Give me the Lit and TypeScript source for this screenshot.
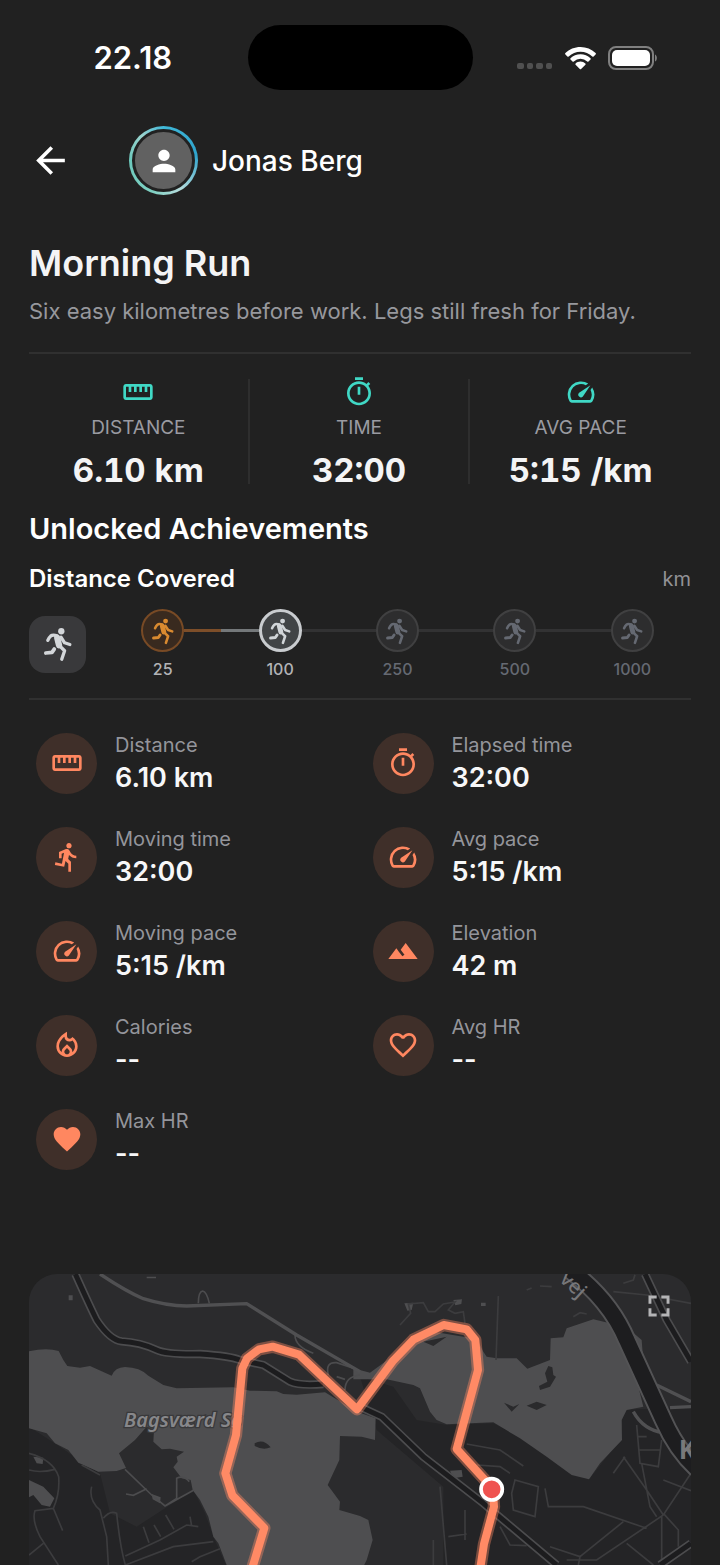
import { LitElement, html, svg, css, TemplateResult } from "lit";
import { customElement, property } from "lit/decorators.js";
import { classMap } from "lit/directives/class-map.js";

const ICONS: Record<string, TemplateResult> = {
  back: svg`<path d="M20 11H7.83l5.59-5.59L12 4l-8 8 8 8 1.41-1.41L7.83 13H20v-2z"/>`,
  person: svg`<path d="M12 12c2.21 0 4-1.79 4-4s-1.79-4-4-4-4 1.79-4 4 1.79 4 4 4zm0 2c-2.67 0-8 1.34-8 4v2h16v-2c0-2.66-5.33-4-8-4z"/>`,
  ruler: svg`<path d="M21 6H3c-1.1 0-2 .9-2 2v8c0 1.1.9 2 2 2h18c1.1 0 2-.9 2-2V8c0-1.1-.9-2-2-2zm0 10H3V8h2v4h2V8h2v4h2V8h2v4h2V8h2v4h2V8h2v8z"/>`,
  timer: svg`<path d="M15 1H9v2h6V1zm-4 13h2V8h-2v6zm8.03-6.61l1.42-1.42c-.43-.51-.9-.99-1.41-1.41l-1.42 1.42C16.07 4.74 14.12 4 12 4c-4.97 0-9 4.03-9 9s4.02 9 9 9 9-4.03 9-9c0-2.12-.74-4.07-1.97-5.61zM12 20c-3.87 0-7-3.13-7-7s3.13-7 7-7 7 3.13 7 7-3.13 7-7 7z"/>`,
  speed: svg`<path d="M20.38 8.57l-1.23 1.85a8 8 0 0 1-.22 7.58H5.07A8 8 0 0 1 15.58 6.85l1.85-1.23A10 10 0 0 0 3.35 19a2 2 0 0 0 1.72 1h13.85a2 2 0 0 0 1.74-1 10 10 0 0 0-.27-10.44zm-9.79 6.84a2 2 0 0 0 2.83 0l5.66-8.49-8.49 5.66a2 2 0 0 0 0 2.83z"/>`,
  run: svg`<path d="M13.49 5.48c1.1 0 2-.9 2-2s-.9-2-2-2-2 .9-2 2 .9 2 2 2zm-3.6 13.9l1-4.4 2.1 2v6h2v-7.5l-2.1-2 .6-3c1.3 1.5 3.3 2.5 5.5 2.5v-2c-1.9 0-3.5-1-4.3-2.4l-1-1.6c-.4-.6-1-1-1.7-1-.3 0-.5.1-.8.1l-5.2 2.2v4.7h2v-3.4l1.8-.7-1.6 8.1-4.900-1-.4 2 7 1.400z"/>`,
  terrain: svg`<path d="M14 6l-3.75 5 2.85 3.8-1.6 1.2C9.81 13.75 7 10 7 10l-6 8h22L14 6z"/>`,
  fire: svg`<path d="M16 6l-.44.55c-.42.52-.98.75-1.54.75C13 7.3 12 6.52 12 5.3V2S4 6 4 13c0 4.42 3.58 8 8 8s8-3.58 8-8c0-2.96-1.61-5.62-4-7zm-4 13c-1.1 0-2-.87-2-1.94 0-.51.2-.99.58-1.36L12 14.3l1.43 1.4c.37.37.57.85.57 1.36C14 18.13 13.1 19 12 19zm3.96-1.5c.04-.36.22-1.89-1.13-3.22L12 11.5l-2.83 2.78C7.81 15.62 8 17.16 8.04 17.5A5.97 5.97 0 0 1 6 13c0-3.16 2.13-5.65 4.03-7.25a3.98 3.98 0 0 0 3.99 3.55c.78 0 1.54-.23 2.18-.66A6.2 6.2 0 0 1 18 13c0 1.79-.79 3.4-2.04 4.5z"/>`,
  heartLine: svg`<path d="M16.5 3c-1.74 0-3.41.81-4.5 2.09C10.91 3.81 9.24 3 7.5 3 4.42 3 2 5.42 2 8.5c0 3.78 3.4 6.86 8.55 11.54L12 21.35l1.45-1.32C18.6 15.36 22 12.28 22 8.5 22 5.42 19.58 3 16.5 3zm-4.4 15.55l-.1.1-.1-.1C7.14 14.24 4 11.39 4 8.5 4 6.5 5.5 5 7.5 5c1.54 0 3.04.99 3.57 2.36h1.87C13.46 5.99 14.96 5 16.5 5c2 0 3.5 1.5 3.5 3.5 0 2.89-3.14 5.74-7.9 10.05z"/>`,
  heart: svg`<path d="M12 21.35l-1.45-1.32C5.4 15.36 2 12.28 2 8.5 2 5.42 4.42 3 7.5 3c1.74 0 3.41.81 4.5 2.09C13.09 3.81 14.76 3 16.5 3 19.58 3 22 5.42 22 8.5c0 3.78-3.4 6.86-8.55 11.54L12 21.35z"/>`,
  expand: svg`<path d="M3 3h7v2.5H5.500V10H3zM14 3h7v7h-2.500V5.500H14zM3 14h2.500v4.500H10V21H3zM18.500 14H21v7h-7v-2.500h4.500z"/>`,
  sprint: svg`<circle cx="14.2" cy="3.500" r="2.100"/><g fill="none" stroke="currentColor" stroke-linecap="round" stroke-linejoin="round"><path d="M11.500 8 12.700 12.800" stroke-width="4.200"/><path d="M11.500 6.500Q8.500 5.600 7.200 6.600 6 7.600 5.200 9.600M14 7.500l2.400 3.700 3.500 1.100M13 13.200l3.400 3.300-1.900 5.700" stroke-width="2.200"/><path d="M9.500 15.400 8 17.600 3.900 18" stroke-width="2.500"/></g>`,
};

@customElement("ui-icon")
class UiIcon extends LitElement {
  @property() name = "back";
  static styles = css`
    :host { display: inline-flex; width: 32px; height: 32px; }
    svg { width: 100%; height: 100%; fill: currentColor; }
  `;
  render() {
    return html`<svg viewBox="0 0 24 24" aria-hidden="true">${ICONS[this.name]}</svg>`;
  }
}

@customElement("status-bar")
class StatusBar extends LitElement {
  static styles = css`
    :host { display: grid; grid-template-columns: 1fr auto 1fr; align-items: center; padding-top: 25px; }
    .time { text-align: center; font-size: 31px; line-height: 36px; font-weight: 600; padding-left: 18px; }
    .island { width: 225px; height: 65px; border-radius: 33px; background: #000; }
    .signals { display: flex; align-items: center; justify-content: flex-end; gap: 12px; padding-right: 62px; }
    .cell { width: 36px; height: 30px; fill: #505050; }
    .wifi { width: 31px; height: 24px; fill: #fff; }
    .battery { width: 50px; height: 24px; }
  `;
  render() {
    return html`
      <div class="time">22.18</div>
      <div class="island"></div>
      <div class="signals">
        <svg class="cell" viewBox="0 0 36 30"><rect x="0" y="20" width="7" height="6" rx="2"/><rect x="10" y="20" width="6" height="6" rx="2"/><rect x="19" y="20" width="7" height="6" rx="2"/><rect x="29" y="20" width="6" height="6" rx="2"/></svg>
        <svg class="wifi" viewBox="0 0 31 24"><path d="M15.5 1C9.6 1 4.3 3.3.4 7.1c-.4.4-.4.9 0 1.3l2 2c.4.4.9.4 1.3 0a17 17 0 0 1 23.6 0c.4.4.9.4 1.3 0l2-2c.4-.4.4-.9 0-1.3A21.7 21.7 0 0 0 15.5 1z"/><path d="M15.5 8.3c-3.9 0-7.4 1.5-10 3.9-.4.4-.4.9 0 1.3l2 2c.4.4.9.4 1.3 0a9.7 9.7 0 0 1 13.4 0c.4.4.9.4 1.3 0l2-2c.4-.4.4-.9 0-1.3a14.7 14.7 0 0 0-10-3.900z"/><path d="M15.5 15.5c-1.9 0-3.6.7-4.9 1.9-.4.4-.4.9 0 1.3l4.200 4.300c.4.4.9.4 1.300 0l4.300-4.300c.4-.4.4-.9 0-1.300a7.200 7.200 0 0 0-4.900-1.900z"/></svg>
        <svg class="battery" viewBox="0 0 50 24"><rect x="1" y="1" width="44" height="22" rx="7" fill="none" stroke="#808080" stroke-width="2"/><rect x="4" y="4" width="38" height="16" rx="5" fill="#fff"/><path d="M47 8.500c2.500 1 2.500 6 0 7z" fill="#808080"/></svg>
      </div>`;
  }
}

@customElement("summary-stats")
class SummaryStats extends LitElement {
  static styles = css`
    :host { display: grid; grid-template-columns: repeat(3, 1fr); }
    .stat { display: flex; flex-direction: column; align-items: center; height: 105px; }
    .stat:not(:last-child) { border-right: 2px solid #2e2e2e; }
    ui-icon { color: #40d8c5; margin-top: -3px; }
    .label { font-size: 19px; line-height: 24px; color: #9a9ba1; margin-top: 8px; }
    .value { font-size: 33px; line-height: 44px; font-weight: 700; font-variant-numeric: tabular-nums; color: #f4f4f5; margin-top: 8px; white-space: nowrap; }
  `;
  render() {
    const stats = [["ruler", "DISTANCE", "6.10 km"], ["timer", "TIME", "32:00"], ["speed", "AVG PACE", "5:15 /km"]];
    return stats.map(([icon, label, value]) => html`
      <div class="stat"><ui-icon name=${icon}></ui-icon><div class="label">${label}</div><div class="value">${value}</div></div>`);
  }
}

@customElement("achievement-track")
class AchievementTrack extends LitElement {
  static styles = css`
    :host { display: flex; align-items: center; gap: 18px; }
    .badge { display: grid; place-items: center; flex: none; width: 57px; height: 57px; border-radius: 16px; background: #39393b; color: #d3d6d9; }
    .badge ui-icon { width: 36px; height: 36px; }
    .track { flex: 1; display: grid; grid-template-columns: repeat(5, 1fr); margin: 0; padding: 0; list-style: none; }
    .step { display: grid; grid-template-columns: 1fr 43px 1fr; align-items: center; row-gap: 7px; color: #656972; }
    .node { box-sizing: border-box; display: grid; place-items: center; width: 43px; height: 43px; border-radius: 50%; border: 2px solid #404041; background: #2d2d2e; }
    .node ui-icon { width: 28px; height: 28px; }
    .line { height: 3px; background: #323233; }
    .step:first-child .before, .step:last-child .after { visibility: hidden; }
    .label { grid-column: 1 / -1; text-align: center; font-size: 16px; line-height: 20px; font-weight: 500; }
    .bronze .label, .silver .label { color: #b2b3b6; }
    .bronze .node { color: #d98a30; border-color: #784a25; background: #392a1f; }
    .bronze .line { background: #7d4e29; }
    .silver .node { color: #d1d5d8; border: 3px solid #c9cccf; background: #414446; }
    .silver .before { background: #74787a; }
  `;
  render() {
    const steps: [string, string][] = [["25", "bronze"], ["100", "silver"], ["250", ""], ["500", ""], ["1000", ""]];
    return html`
      <div class="badge"><ui-icon name="sprint"></ui-icon></div>
      <ol class="track">
        ${steps.map(([km, tier]) => html`
          <li class=${classMap({ step: true, bronze: tier === "bronze", silver: tier === "silver" })}>
            <span class="line before"></span><span class="node"><ui-icon name="sprint"></ui-icon></span><span class="line after"></span>
            <span class="label">${km}</span>
          </li>`)}
      </ol>`;
  }
}

@customElement("metric-grid")
class MetricGrid extends LitElement {
  static styles = css`
    :host { display: grid; grid-template-columns: repeat(2, 1fr); column-gap: 18px; row-gap: 30px; padding-left: 7px; }
    .metric { display: flex; gap: 18px; height: 64px; align-items: center; }
    .disc { display: grid; place-items: center; flex: none; width: 61px; height: 61px; border-radius: 50%; background: #3f2f29; color: #ff8760; }
    .label { font-size: 20px; line-height: 30px; color: #94959b; }
    .value { font-size: 27px; line-height: 36px; font-weight: 600; color: #f7f7f8; }
  `;
  render() {
    const metrics = [
      ["ruler", "Distance", "6.10 km"], ["timer", "Elapsed time", "32:00"],
      ["run", "Moving time", "32:00"], ["speed", "Avg pace", "5:15 /km"],
      ["speed", "Moving pace", "5:15 /km"], ["terrain", "Elevation", "42 m"],
      ["fire", "Calories", "--"], ["heartLine", "Avg HR", "--"],
      ["heart", "Max HR", "--"],
    ];
    return metrics.map(([icon, label, value]) => html`
      <div class="metric">
        <div class="disc"><ui-icon name=${icon}></ui-icon></div>
        <div><div class="label">${label}</div><div class="value">${value}</div></div>
      </div>`);
  }
}

const ROUTE = "M755 930 793 804 697 706 676 640 708 525 727 325 741 295 777 268 818 260 897 284 1071 448 1178 304 1240 239 1331 195 1400 208 1426 240 1434 330 1370 567 1478 685 1482 740 1452 852 1440 930";

@customElement("route-map")
class RouteMap extends LitElement {
  static styles = css`
    :host { display: block; position: relative; overflow: hidden; border-radius: 28px 28px 0 0; background: #2b2b2d; min-height: 291px; }
    .map { position: absolute; inset: 0; width: 100%; height: 100%; }
    .water { fill: #4e4e50; }
    .land { fill: #2a2a2c; }
    .urban { fill: #242426; }
    .streets { fill: none; stroke: #3c3c3e; stroke-width: 5; }
    .road { fill: none; stroke: #505052; stroke-width: 10; stroke-linejoin: round; }
    .casing { fill: none; stroke: #4c4c4e; stroke-width: 25; stroke-linejoin: round; }
    .core { fill: none; stroke: #1c1c1e; stroke-width: 15; stroke-linejoin: round; }
    .motor-casing { fill: none; stroke: #535355; stroke-width: 58; }
    .motor { fill: none; stroke: #1d1d1f; stroke-width: 46; }
    .glow { fill: none; stroke: #ff8a65; stroke-opacity: 0.4; stroke-width: 37; stroke-linejoin: round; }
    .route { fill: none; stroke: #ff8a65; stroke-width: 24; stroke-linejoin: round; }
    .name { font: italic 600 60px "Noto Sans", "Open Sans", sans-serif; fill: #87878a; stroke: #39393b; stroke-width: 8; paint-order: stroke; }
    .street-name { font: 500 60px "Noto Sans", "Open Sans", sans-serif; fill: #77777a; }
    .town { font: 700 78px "Noto Sans", "Open Sans", sans-serif; fill: #79797b; }
    .expand { position: absolute; top: 16px; right: 16px; display: grid; place-items: center; padding: 2px; border: 0; background: none; color: #b4b4b6; }
    .expand ui-icon { width: 28px; height: 28px; }
  `;
  render() {
    return html`
      <svg class="map" viewBox="87 42 1986 873" preserveAspectRatio="xMidYMin slice" role="img" aria-label="Route map">
        <path class="urban" d="M87 500 180 560 250 610 300 640 330 760 410 800 580 690 615 760 640 830 680 920H87zM1080 350 1180 380 1250 480 1340 495 1480 490 1620 560 1700 630 1770 655 1860 540 1870 450 2073 440V920H1330V680L1130 510z"/>
        <path class="water" d="M87 274Q140 262 176 273L190 300 202 318 240 323 270 318 335 347Q345 322 375 321 420 322 445 347L490 375 530 385 700 382 750 392 830 394 850 402 890 404 975 397 1071 455 1127 475 1125 540 1085 530 1020 528 1018 600 983 675 1020 725 1018 750 1080 768 1105 780 1118 840 1100 900 1090 920H682L655 850 640 830 625 770 600 720 578 690 572 660 545 655 520 622 533 605 530 590 552 575 510 566 485 568 460 545 462 510 440 500 405 540 357 580 378 624 350 633 295 635 235 608 205 570 165 550 140 520 87 505z"/>
        <path class="water" d="M1060 325 1110 338 1190 280 1300 215 1390 230 1430 235 1450 275 1460 290 1490 295 1550 295 1582 326 1650 300 1652 235 1690 232 1700 205 1780 178 1830 190 1890 210 1925 240 1928 280 1900 320 1930 440 1880 450 1865 480 1866 540 1800 610 1767 658 1715 645 1640 590 1560 535 1480 487 1340 493 1310 480 1290 455 1260 385 1240 375 1160 358 1060 358z"/>
        <path class="land" d="M764 550Q790 535 812 562 790 572 764 558zM1635 340 1645 318 1657 322 1660 345 1668 350 1650 380 1620 390 1617 378 1642 365zM1512 428 1540 440 1558 432 1535 455zM1580 437 1610 425 1640 435 1610 450zM1270 245 1340 230 1300 258z"/>
        <path class="water" d="M100 590 130 593 128 612 110 610zM87 660 130 680 163 715 150 740 125 735 100 705 87 712zM455 702 482 712 480 730 458 718zM1350 632 1385 630 1388 650 1360 655zM206 106h12v15h-12zM440 50h28v5h-28zM1213 130 1240 128 1235 150 1222 152zM1360 120 1386 118 1384 132 1366 136zM1443 128h14v10h-14z"/>
        <g class="streets">
          <path d="M87 580Q160 600 176 650 180 700 160 745L188 812M87 630Q120 640 165 628M160 745 105 752Q95 780 120 830L175 915M87 885 130 850M245 615 300 645M275 680Q265 720 300 750L320 830 325 915M310 775Q330 750 350 760 360 860 376 915M376 888 480 840 560 795 595 800M430 800 447 848M462 795 482 830M497 765 522 808M570 770 575 798M376 915 390 910 520 860 640 845M575 905 600 890 660 866"/>
          <path d="M1400 552 1500 570 1570 618M1430 615 1500 620 1530 640M1545 660 1615 680 1605 770 1540 750 1535 700zM1635 685 1645 740 1750 740 1940 805M1320 680 1340 915M1395 750V840M1345 830 1400 822M1300 840V915M1500 800 1530 855 1580 857M1650 860 1740 890 1735 915M1740 890 1870 785M1700 900 1790 900 1990 765 2073 640M1990 765 1940 690 1870 590M1910 495 1920 610 1975 620 1985 540M1915 530H1940M1915 570H1980M1840 640 1875 590M1925 610 1950 740 1970 770M1880 850 1960 915M1985 770V915M1990 760 2035 810V860M1990 660 2073 692M1840 95 1940 105 2073 130M1870 70 1900 60 1905 44"/>
        </g>
        <g class="streets" stroke="#4c4c4e">
          <path stroke="#4c4c4e" d="M375 628 455 705 495 738 530 715V655Q550 645 568 665M495 738 582 690M378 702 400 706 440 686M595 130Q595 95 608 93 620 95 628 130M885 225Q885 260 940 280M985 345Q975 305 1010 308L1060 325M1010 350 1035 358M1035 390Q1035 350 1080 345"/>
          <path d="M1200 195 1232 160 1225 132 1270 128 1285 155 1305 155 1330 132 1365 126 1345 150 1365 160 1390 155 1395 190M1580 90 1595 84M1620 78 1655 80M1720 170 1740 158 1760 162M1495 108 1488 300"/>
        </g>
        <path class="road" d="M300 42Q380 95 430 116 500 138 560 138L740 131 890 225 1080 335"/>
        <path class="casing" d="M226 42Q270 140 290 180 330 240 365 244 420 247 470 270 500 284 600 282 690 288 720 300L790 315 870 365Q900 378 970 372"/>
        <path class="core" d="M226 42Q270 140 290 180 330 240 365 244 420 247 470 270 500 284 600 282 690 288 720 300L790 315 870 365Q900 378 970 372"/>
        <path class="casing" d="M1080 440 1145 470 1270 590 1450 730 1670 915M1935 42 2000 180 2073 305M1980 915 2073 850"/>
        <path class="core" d="M1080 440 1145 470 1270 590 1450 730 1670 915M1935 42 2000 180 2073 305M1980 915 2073 850"/>
        <path class="road" d="M1900 455Q1930 510 1990 518M1970 375 2073 425M2010 443 2073 440"/>
        <path class="motor-casing" d="M1710 30Q1830 120 1880 240L1990 480Q2030 570 2090 625"/>
        <path class="motor" d="M1710 30Q1830 120 1880 240L1990 480Q2030 570 2090 625"/>
        <text class="name" x="372" y="500">Bagsværd Sø</text>
        <text class="street-name" transform="translate(1676 62) rotate(42)">vej</text>
        <text class="town" x="2036" y="597">K</text>
        <path class="glow" d=${ROUTE}/>
        <path class="route" d=${ROUTE}/>
        <circle cx="1475" cy="688" r="32" fill="#ef5350" stroke="#fff" stroke-width="11"/>
      </svg>
      <button class="expand" type="button" aria-label="Expand map"><ui-icon name="expand"></ui-icon></button>`;
  }
}

@customElement("app-root")
class AppRoot extends LitElement {
  static styles = css`
    :host { display: flex; flex-direction: column; min-height: 100vh; background: #212121; color: #fff; font-family: Inter, "Open Sans", sans-serif; }
    .header { display: flex; align-items: center; padding: 36px 29px 0; }
    .back { display: grid; place-items: center; padding: 0; border: 0; background: none; color: #fff; }
    .back ui-icon { width: 43px; height: 43px; }
    .avatar { display: grid; place-items: center; box-sizing: border-box; width: 69px; height: 69px; margin-left: 57px; padding: 3px; border-radius: 50%; background: conic-gradient(#3fb8d8, #2fa3cc 80deg, #b5dcdc 150deg, #7fd0c2 200deg, #6cc9bd 270deg, #9ad3cf 320deg, #3fb8d8); }
    .face { display: grid; place-items: center; box-sizing: border-box; width: 63px; height: 63px; border-radius: 50%; border: 3px solid #212121; background: #616161; }
    .face ui-icon { width: 34px; height: 34px; }
    .user { margin-left: 14px; font-size: 28px; line-height: 36px; font-weight: 500; }
    .content { flex: 1; display: flex; flex-direction: column; padding: 44px 29px 0; }
    h1, h2, h3, p { margin: 0; }
    h1 { font-size: 36px; line-height: 48px; font-weight: 600; color: #f4f4f5; }
    .note { margin-top: 10px; font-size: 22px; line-height: 28px; color: #97989d; }
    .rule { height: 2px; background: #303030; }
    .note + .rule { margin-top: 27px; }
    summary-stats { margin-top: 25px; }
    h2 { margin-top: 25px; font-size: 29px; line-height: 40px; font-weight: 600; }
    .row { display: flex; justify-content: space-between; align-items: center; margin-top: 16px; }
    h3 { font-size: 24px; line-height: 28px; font-weight: 600; }
    .unit { font-size: 20px; line-height: 28px; color: #929296; }
    achievement-track { margin-top: 16px; margin-bottom: 19px; }
    metric-grid { margin-top: 31px; }
    route-map { flex: 1; margin-top: 103px; }
  `;
  render() {
    return html`
      <status-bar></status-bar>
      <header class="header">
        <button class="back" type="button" aria-label="Back"><ui-icon name="back"></ui-icon></button>
        <div class="avatar"><div class="face"><ui-icon name="person"></ui-icon></div></div>
        <div class="user">Jonas Berg</div>
      </header>
      <main class="content">
        <h1>Morning Run</h1>
        <p class="note">Six easy kilometres before work. Legs still fresh for Friday.</p>
        <div class="rule"></div>
        <summary-stats></summary-stats>
        <h2>Unlocked Achievements</h2>
        <div class="row"><h3>Distance Covered</h3><span class="unit">km</span></div>
        <achievement-track></achievement-track>
        <div class="rule"></div>
        <metric-grid></metric-grid>
        <route-map></route-map>
      </main>`;
  }
}
